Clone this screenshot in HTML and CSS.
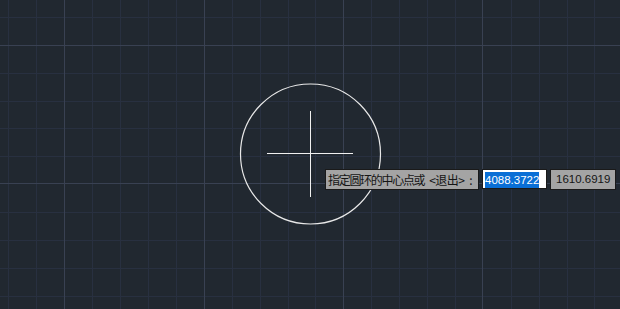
FILE: index.html
```html
<!DOCTYPE html>
<html lang="zh-CN">
<head>
<meta charset="utf-8">
<title>AutoCAD 圆环</title>
<link rel="stylesheet" href="styles.css">
</head>
<body>
<div class="canvas">
  <svg class="drawing" width="620" height="309" viewBox="0 0 620 309" xmlns="http://www.w3.org/2000/svg">
    <g class="minor">
      <path d="M8.5 0V309M36.5 0V309M92.5 0V309M120.5 0V309M148.5 0V309M176.5 0V309M232.5 0V309M260.5 0V309M288.5 0V309M315.5 0V309M371.5 0V309M399.5 0V309M427.5 0V309M455.5 0V309M511.5 0V309M539.5 0V309M567.5 0V309M594.5 0V309"/>
      <path d="M0 17.5H620M0 73.5H620M0 101.5H620M0 128.5H620M0 156.5H620M0 212.5H620M0 240.5H620M0 268.5H620M0 296.5H620"/>
    </g>
    <g class="major">
      <path d="M64.5 0V309M204.5 0V309M343.5 0V309M482.5 0V309"/>
      <path d="M0 45.5H620M0 183.5H620"/>
    </g>
    <circle class="ring" cx="310.5" cy="154" r="70"/>
    <g class="cross">
      <path d="M267 153.5H353M310.5 111V197"/>
    </g>
  </svg>
  <div class="dyn-input">
    <div class="prompt"><span class="cjk">指定圆环的中心点或</span><span class="opt">&lt;退出&gt;</span><span class="colon">:</span></div>
    <div class="field field-active"><span class="sel">4088.3722</span></div>
    <div class="field field-idle">1610.6919</div>
  </div>
</div>
</body>
</html>
```
FILE: styles.css
```css
html, body {
  margin: 0;
  padding: 0;
  background: #212830;
}
.canvas {
  position: relative;
  width: 620px;
  height: 309px;
  overflow: hidden;
  background: #212830;
}
.drawing {
  display: block;
}
.minor path {
  stroke: #283040;
  stroke-width: 1;
  fill: none;
}
.major path {
  stroke: #394152;
  stroke-width: 1;
  fill: none;
}
.ring {
  fill: none;
  stroke: #e8e8e8;
  stroke-width: 1.2;
}
.cross path {
  stroke: #f0f0f0;
  stroke-width: 1;
  fill: none;
}
.dyn-input {
  position: absolute;
  left: 325px;
  top: 169px;
  display: flex;
  align-items: flex-start;
  gap: 3px;
}
.prompt {
  box-sizing: border-box;
  width: 154px;
  height: 21px;
  padding: 0 0 0 2px;
  display: flex;
  align-items: center;
  background: #a4a4a4;
  border: 1px solid #1a1a1a;
  color: #151515;
  font-family: "Noto Sans CJK SC", "Liberation Sans", sans-serif;
  font-size: 12px;
  line-height: 19px;
  white-space: nowrap;
}
.cjk {
  letter-spacing: -1.3px;
}
.opt {
  margin-left: 5px;
  letter-spacing: -0.6px;
}
.colon {
  margin-left: 5px;
}
.field {
  box-sizing: border-box;
  height: 20px;
  font-family: "Liberation Sans", Arial, sans-serif;
  font-size: 11.5px;
  line-height: 18px;
  white-space: nowrap;
}
.field-active {
  width: 65px;
  padding: 1px 0 0 2px;
  background: #ffffff;
  border: 1px solid #1a1a1a;
}
.sel {
  display: inline-block;
  height: 16px;
  line-height: 16px;
  background: #0a6fd6;
  color: #ffffff;
}
.field-idle {
  width: 66px;
  height: 21px;
  padding: 0 0 0 5px;
  background: #a4a4a4;
  border: 1px solid #1a1a1a;
  color: #151515;
  line-height: 19px;
}
```
